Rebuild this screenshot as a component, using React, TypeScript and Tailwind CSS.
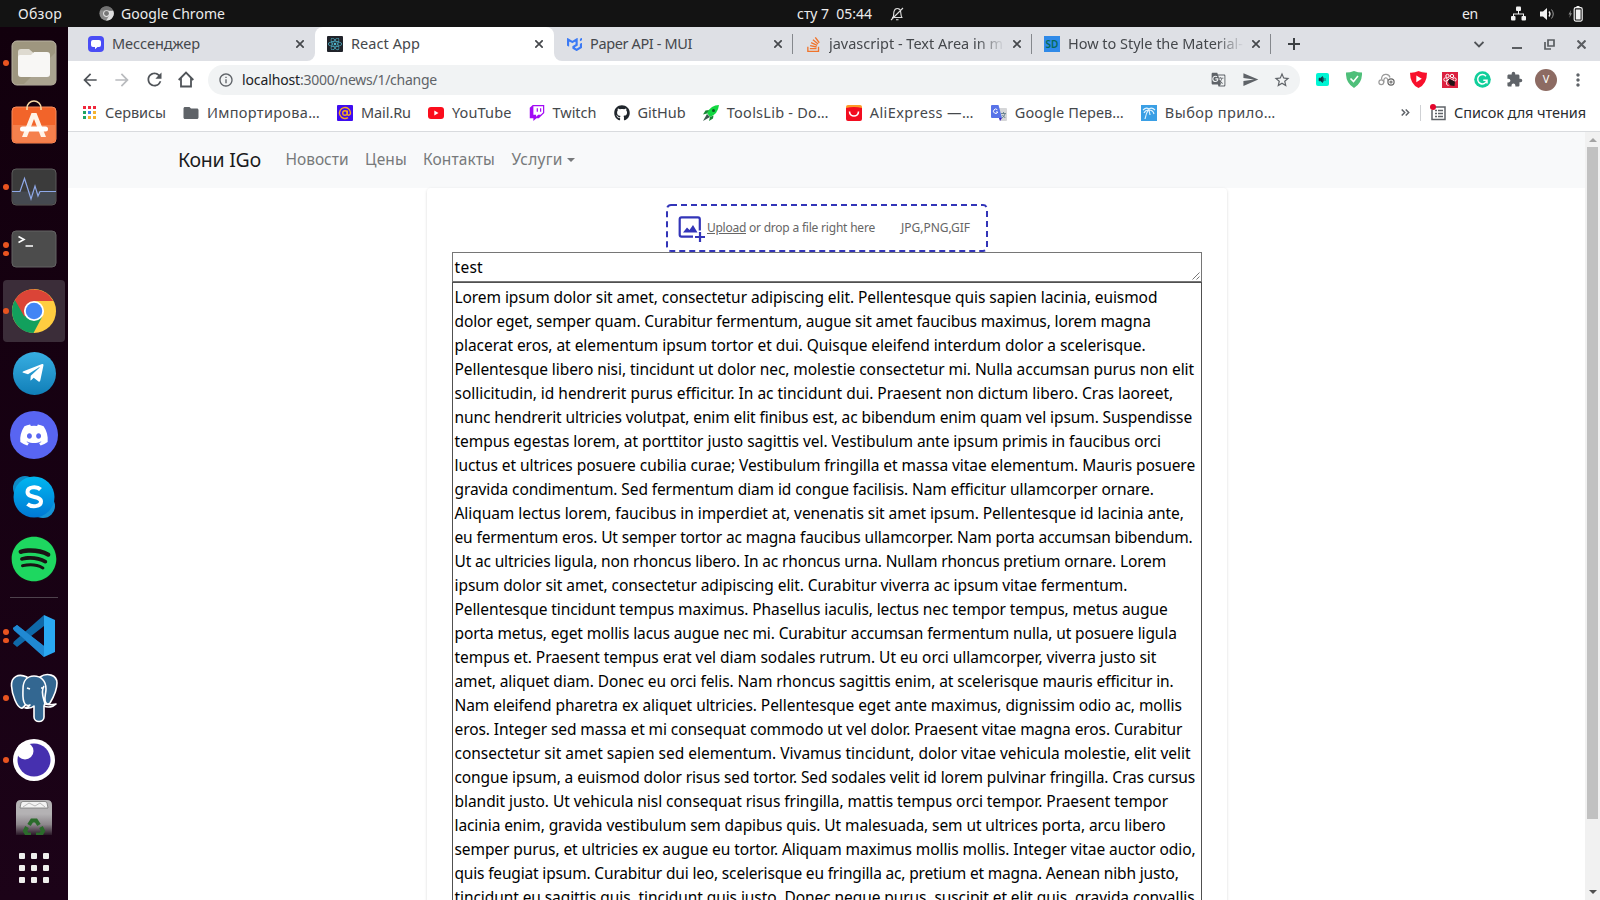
import { useLayoutEffect, useRef } from 'react';
import type { ReactNode } from 'react';
import { FaDiscord, FaGithub, FaReact, FaSpotify, FaTelegramPlane, FaTwitch } from 'react-icons/fa';
import { SiMui, SiStackoverflow } from 'react-icons/si';
import {
  MdArrowBack,
  MdArrowForward,
  MdExtension,
  MdFolder,
  MdGTranslate,
  MdMoreVert,
  MdOutlineInfo,
  MdRefresh,
  MdSend,
  MdStarBorder,
} from 'react-icons/md';

/* Single line of text tracked so that it fills exactly `w` pixels. */
function Fit({ w, children, className = '' }: { w: number; children: string; className?: string }) {
  const ref = useRef<HTMLSpanElement>(null);
  useLayoutEffect(() => {
    const el = ref.current;
    if (!el) return;
    el.style.letterSpacing = '0px';
    const natural = el.getBoundingClientRect().width;
    el.style.letterSpacing = `${(w - natural) / children.length}px`;
  }, [w, children]);
  return (
    <span ref={ref} className={`inline-block shrink-0 whitespace-pre ${className}`}>
      {children}
    </span>
  );
}

const LINES: [string, number][] = [
  ['Lorem ipsum dolor sit amet, consectetur adipiscing elit. Pellentesque quis sapien lacinia, euismod', 1134],
  ['dolor eget, semper quam. Curabitur fermentum, augue sit amet faucibus maximus, lorem magna', 1127.5],
  ['placerat eros, at elementum ipsum tortor et dui. Quisque eleifend interdum dolor a scelerisque.', 1122.5],
  ['Pellentesque libero nisi, tincidunt ut dolor nec, molestie consectetur mi. Nulla accumsan purus non elit', 1170],
  ['sollicitudin, id hendrerit purus efficitur. In ac tincidunt dui. Praesent non dictum libero. Cras laoreet,', 1149.5],
  ['nunc hendrerit ultricies volutpat, enim elit finibus est, ac bibendum enim quam vel ipsum. Suspendisse', 1168],
  ['tempus egestas lorem, at porttitor justo sagittis vel. Vestibulum ante ipsum primis in faucibus orci', 1137.5],
  ['luctus et ultrices posuere cubilia curae; Vestibulum fringilla et massa vitae elementum. Mauris posuere', 1171],
  ['gravida condimentum. Sed fermentum diam id congue facilisis. Nam efficitur ullamcorper ornare.', 1130.5],
  ['Aliquam lectus lorem, faucibus in imperdiet at, venenatis sit amet ipsum. Pellentesque id lacinia ante,', 1160],
  ['eu fermentum eros. Ut semper tortor ac magna faucibus ullamcorper. Nam porta accumsan bibendum.', 1168.5],
  ['Ut ac ultricies ligula, non rhoncus libero. In ac rhoncus urna. Nullam rhoncus pretium ornare. Lorem', 1142.5],
  ['ipsum dolor sit amet, consectetur adipiscing elit. Curabitur viverra ac ipsum vitae fermentum.', 1104.5],
  ['Pellentesque tincidunt tempus maximus. Phasellus iaculis, lectus nec tempor tempus, metus augue', 1144],
  ['porta metus, eget mollis lacus augue nec mi. Curabitur accumsan fermentum nulla, ut posuere ligula', 1153],
  ['tempus et. Praesent tempus erat vel diam sodales rutrum. Ut eu orci ullamcorper, viverra justo sit', 1133],
  ['amet, aliquet diam. Donec eu orci felis. Nam rhoncus sagittis enim, at scelerisque mauris efficitur in.', 1150],
  ['Nam eleifend pharetra ex aliquet ultricies. Pellentesque eget ante maximus, dignissim odio ac, mollis', 1158],
  ['eros. Integer sed massa et mi consequat commodo ut vel dolor. Praesent vitae magna eros. Curabitur', 1158.5],
  ['consectetur sit amet sapien sed elementum. Vivamus tincidunt, dolor vitae vehicula molestie, elit velit', 1166.5],
  ['congue ipsum, a euismod dolor risus sed tortor. Sed sodales velit id lorem pulvinar fringilla. Cras cursus', 1171],
  ['blandit justo. Ut vehicula nisl consequat risus fringilla, mattis tempus orci tempor. Praesent tempor', 1144.5],
  ['lacinia enim, gravida vestibulum sem dapibus quis. Ut malesuada, sem ut ultrices porta, arcu libero', 1142],
  ['semper purus, et ultricies ex augue eu tortor. Aliquam maximus mollis mollis. Integer vitae auctor odio,', 1171.5],
  ['quis feugiat ipsum. Curabitur dui leo, scelerisque eu fringilla ac, pretium et magna. Aenean nibh justo,', 1155],
  ['tincidunt eu sagittis quis, tincidunt quis justo. Donec neque purus, suscipit et elit quis, gravida convallis', 1170.5],
];

function TopBar() {
  return (
    <header className="flex h-[27px] shrink-0 items-center bg-[#131313] text-[14px] text-[#ececec]">
      <div className="flex w-[797px] shrink-0 items-center pl-[18px]">
        <Fit w={44}>Обзор</Fit>
        <svg className="ml-[37px] mr-[7px]" width="15" height="15" viewBox="0 0 16 16">
          <circle cx="8" cy="8" r="7.6" fill="#8b8b8b" />
          <path d="M8 4.5h7a7.6 7.6 0 0 1-7.3 11L11 9.8z" fill="#dedede" />
          <path d="M1.2 4.5A7.6 7.6 0 0 1 15 5H8z" fill="#727272" />
          <circle cx="8" cy="8" r="3.6" fill="#e6e6e6" />
          <circle cx="8" cy="8" r="2.6" fill="#777" />
        </svg>
        <Fit w={104}>Google Chrome</Fit>
      </div>
      <div className="flex items-center gap-[18px]">
        <Fit w={75}>сту 7  05:44</Fit>
        <svg width="14" height="14" viewBox="0 0 14 14" fill="none" stroke="#dedede" strokeWidth="1.1">
          <path d="M2 10.5h10.5M3 10.3C4 8.500 3.500 6.500 4 4.500c.5-2 2-3 3.300-3s3 1 3.300 3c.4 2 .2 4 1.200 5.800M6 12.700h2.500M1 13L13 1" />
        </svg>
      </div>
      <div className="flex flex-1 items-center justify-end pr-[17px]">
        <Fit w={16}>en</Fit>
        <svg className="ml-[33px]" width="15" height="15" viewBox="0 0 15 15" fill="#f2f2f2">
          <rect x="5" y="0.500" width="5" height="4.500" rx="1" />
          <rect x="0" y="10" width="4.500" height="4.500" rx="1" />
          <rect x="10.500" y="10" width="4.500" height="4.500" rx="1" />
          <path d="M7 5h1v2.500h5V10h-1V8.500H3V10H2V7.500h5z" />
        </svg>
        <svg className="ml-[14px]" width="15" height="14" viewBox="0 0 15 14" fill="none" stroke="#9a9a9a">
          <path d="M0 4.500h3L7 1v12L3 9.500H0z" fill="#f2f2f2" stroke="none" />
          <path d="M9 4.500q2 2.500 0 5" stroke="#f2f2f2" strokeWidth="1.300" />
          <path d="M11.500 2.500q3.500 4.500 0 9" />
        </svg>
        <svg className="ml-[13px]" width="15" height="16" viewBox="0 0 15 16">
          <path d="M3 4L0.500 8.500H2L1.300 12 4 7.300H2.500z" fill="#888" />
          <path d="M8.500 0h3v1.500h-3z" fill="#f2f2f2" />
          <rect x="6.200" y="1.700" width="8" height="13.400" rx="1.500" fill="none" stroke="#f2f2f2" strokeWidth="1.200" />
          <rect x="7.800" y="3.500" width="4.800" height="10" fill="#f2f2f2" />
        </svg>
      </div>
    </header>
  );
}

function Slot({ dots = 0, active = false, children }: { dots?: number; active?: boolean; children: ReactNode }) {
  return (
    <div className="flex h-[62px] w-[68px] shrink-0 items-center">
      <div className="flex w-[3px] shrink-0 flex-col gap-[3px]">
        {Array.from({ length: dots }, (_, i) => (
          <span key={i} className="relative left-[3px] z-10 h-[5.500px] w-[5.500px] rounded-full bg-[#e95420]" />
        ))}
      </div>
      <div className={`flex h-[62px] w-[62px] items-center justify-center rounded-[4px] ${active ? 'bg-[#3b2d39]' : ''}`}>
        {children}
      </div>
    </div>
  );
}

function Dock() {
  return (
    <aside className="flex w-[68px] shrink-0 flex-col bg-gradient-to-b from-[#12000d] to-[#1c0318] pt-[5px]">
      <Slot dots={1}>
        <svg width="46" height="46" viewBox="0 0 46 46">
          <rect x="1" y="1" width="44" height="44" rx="5" fill="#9e967f" stroke="#bab4a4" />
          <path d="M45 12L12 45h29a4 4 0 0 0 4-4z" fill="#aaa390" />
          <path d="M7 12q0-3 3-3h8l4 3.500v6H7z" fill="#dedad0" />
          <path d="M7 17q0-2 2-2h11l3-3h13q3 0 3 3v19q0 3-3 3H10q-3 0-3-3z" fill="#f8f7f5" />
        </svg>
      </Slot>
      <Slot>
        <svg className="mb-[7px]" width="46" height="44" viewBox="0 0 46 44">
          <rect x="1" y="7" width="44" height="36" rx="4" fill="#f2642a" stroke="#f88c5d" />
          <path d="M2 25h42v14q0 3-3 3H5q-3 0-3-3z" fill="#f5804d" />
          <path d="M16 10v-2a7 7 0 0 1 14 0v2" fill="none" stroke="#f7d9a4" strokeWidth="1.600" />
          <path d="M20.500 13h5L35 37h-5l-7-18-7 18h-5z" fill="#fff3e8" />
          <rect x="9" y="26.500" width="28" height="5" rx="2.500" fill="#fff" />
        </svg>
      </Slot>
      <Slot dots={1}>
        <svg width="46" height="38" viewBox="0 0 46 38">
          <rect x="1" y="1" width="44" height="36" rx="4" fill="#3b3b3b" stroke="#5b5b5b" />
          <path d="M2 23.500h42V33q0 3-3 3H5q-3 0-3-3z" fill="#454950" />
          <path d="M1 23.500h8l4.500-13L20 31l4-13 3 10 2-4.500h16" fill="none" stroke="#8fa8e8" strokeWidth="1.200" />
        </svg>
      </Slot>
      <Slot dots={2}>
        <svg width="46" height="38" viewBox="0 0 46 38">
          <rect x="1" y="1" width="44" height="36" rx="4" fill="#4c4c4c" stroke="#626262" />
          <path d="M7.500 6.500l5.500 3-5.500 3M14.500 16H22" fill="none" stroke="#fff" strokeWidth="1.600" />
        </svg>
      </Slot>
      <Slot dots={1} active>
        <svg width="46" height="46" viewBox="0 0 48 48">
          <circle cx="24" cy="24" r="23" fill="#ffcd40" />
          <path d="M24 24L4.100 12.500A23 23 0 0 0 23.500 47l9-17z" fill="#12a05d" />
          <path d="M4.100 12.500A23 23 0 0 1 44 13.500H24L14 30z" fill="#db4437" />
          <circle cx="24" cy="24" r="10.500" fill="#fff" />
          <circle cx="24" cy="24" r="8.600" fill="#4285f4" />
        </svg>
      </Slot>
      <Slot>
        <div className="flex size-[43px] items-center justify-center rounded-full bg-gradient-to-b from-[#37aee2] to-[#0f7fb8]">
          <FaTelegramPlane className="mr-[3px] size-[24px] text-white" />
        </div>
      </Slot>
      <Slot>
        <div className="flex size-[48px] items-center justify-center rounded-full bg-[#5865f2]">
          <FaDiscord className="size-[30px] text-white" />
        </div>
      </Slot>
      <Slot>
        <svg width="44" height="44" viewBox="0 0 44 44">
          <defs>
            <linearGradient id="sky" x1="0" y1="0" x2="0" y2="1">
              <stop offset="0" stopColor="#00b7f0" />
              <stop offset="1" stopColor="#0078d4" />
            </linearGradient>
          </defs>
          <circle cx="13" cy="13" r="12" fill="#0f89c4" />
          <circle cx="31" cy="31" r="12" fill="#1593d6" />
          <circle cx="22" cy="22" r="20.500" fill="url(#sky)" />
          <path d="M28.500 14.500C25 11 15.500 11.500 15.500 17c0 6.500 13.500 3.500 13.500 9.500 0 5.500-9.500 6-13.500 2.500" fill="none" stroke="#fff" strokeWidth="4" />
        </svg>
      </Slot>
      <Slot>
        <div className="flex size-[46px] items-center justify-center rounded-full bg-[#191414]">
          <FaSpotify className="size-[46px] text-[#1ed760]" />
        </div>
      </Slot>
      <div className="flex h-[15px] shrink-0 items-center justify-center">
        <span className="h-px w-[48px] bg-[#4e424c]" />
      </div>
      <Slot dots={2}>
        <svg width="42" height="42" viewBox="0 0 42 42">
          <path d="M0 13l4-3L31 31v11L1 15.500z" fill="#1478bd" />
          <path d="M0 28.500l4 3.500L31 11V0L1 26.500z" fill="#0f69a9" />
          <path d="M0 13l4-3 27 21v11L0 14z" fill="#2089d2" />
          <path d="M31 0l11 5v32l-11 5z" fill="#2aa8f2" />
        </svg>
      </Slot>
      <Slot dots={1}>
        <svg width="48" height="50" viewBox="0 0 48 50" fill="#336791" stroke="#fff" strokeWidth="1.600" strokeLinejoin="round">
          <path d="M30 4C37-1 47 2 47 10c0 7-4 15-7 20-2 2-4 1-5-2z" />
          <path d="M17 4C8 0 1 4 1.500 13 2 22 7 34 11 35c2 .5 3-1 6-5z" />
          <path d="M15 31c-3-4-2-9-2-15 0-8 4-13 11-13s12 5 12 13c0 5-2 8-1 14l-1 3v11c0 6-10 6-10 0V33c-3 3-6 2-9 2 2-1 4-1 5-3-2 1-4 0-5-1z" />
          <path d="M35 31c3 1 6 1 11 0-3 3-8 4-12 2M34 13c-4 6 0 13 1 18" fill="none" />
          <path d="M17 15l3 1M31 15l2 0" fill="none" />
        </svg>
      </Slot>
      <Slot dots={1}>
        <svg width="42" height="42" viewBox="0 0 42 42">
          <circle cx="21" cy="21" r="21" fill="#fff" />
          <circle cx="21" cy="21" r="16.500" fill="#4630af" />
          <circle cx="12" cy="12" r="8.500" fill="#fff" />
        </svg>
      </Slot>
      <Slot>
        <svg className="mb-[11px]" width="38" height="36" viewBox="0 0 38 36">
          <defs>
            <linearGradient id="bin" x1="0" y1="0" x2="0" y2="1">
              <stop offset="0.400" stopColor="#b4b2b4" />
              <stop offset="0.700" stopColor="#8d878c" />
              <stop offset="1" stopColor="#2a1727" />
            </linearGradient>
          </defs>
          <path d="M1 6q0-5 5-5h26q5 0 5 5v30H1z" fill="url(#bin)" />
          <path d="M5 9l1-5q.3-1.500 2-1.500h22q1.700 0 2 1.500l1 5z" fill="#f3f3f3" stroke="#777" strokeWidth="0.800" />
          <path d="M8 8l6-4 6 3 5-3 5 4" fill="none" stroke="#aaa" strokeWidth="0.800" />
          <g fill="none" stroke="#2b6b2b" strokeWidth="4">
            <path d="M14 26l3-4.500h4l3 4.500" />
            <path d="M26 28l2 4-2 3.500h-5" />
            <path d="M12 28l-2 4 2 3.500h4" />
          </g>
        </svg>
      </Slot>
      <div className="grid grid-cols-3 gap-[6px] self-center">
        {Array.from({ length: 9 }, (_, i) => (
          <span key={i} className="size-[6px] rounded-[1px] bg-[#eeeeec]" />
        ))}
      </div>
    </aside>
  );
}

function Cross({ className = '' }: { className?: string }) {
  return (
    <svg className={className} width="8" height="8" viewBox="0 0 8 8" stroke="#45484c" strokeWidth="1.700">
      <path d="M0.300 0.300l7.400 7.400M7.700 0.300L0.300 7.700" />
    </svg>
  );
}

function Tab({ icon, title, w, fade = false, sep = false }: { icon: ReactNode; title: string; w: number; fade?: boolean; sep?: boolean }) {
  return (
    <div className="flex h-[34px] w-[239px] shrink-0 items-center pl-[12px]">
      <span className="flex size-[16px] shrink-0 items-center justify-center">{icon}</span>
      <div
        className={`ml-[8px] w-[176px] shrink-0 overflow-hidden text-[14.500px] text-[#45484c] ${
          fade ? '[mask-image:linear-gradient(to_right,black_84%,transparent)]' : ''
        }`}
      >
        <Fit w={w}>{title}</Fit>
      </div>
      <Cross className="ml-[8px]" />
      {sep && <span className="ml-auto h-[20px] w-px bg-[#85888d]" />}
    </div>
  );
}

function TabStrip() {
  return (
    <div className="flex h-[34px] shrink-0 bg-white">
      <div className="w-[247px] shrink-0 rounded-br-[8px] bg-[#dee0e5] pl-[8px]">
        <Tab
          w={88}
          title="Мессенджер"
          icon={
            <svg width="16" height="16" viewBox="0 0 16 16">
              <rect width="16" height="16" rx="4" fill="#4a4df5" />
              <path d="M5 4h6q2 0 2 2v3q0 2-2 2h-1.500L7 13.300V11H5q-2 0-2-2V6q0-2 2-2z" fill="#fff" />
            </svg>
          }
        />
      </div>
      <div className="shrink-0 bg-[#dee0e5]">
        <div className="w-[239px] rounded-t-[8px] bg-white">
          <Tab
            w={69}
            title="React App"
            icon={
              <span className="flex size-[16px] items-center justify-center rounded-[1px] bg-[#20232a]">
                <FaReact className="size-[14px] text-[#4fb8cf]" />
              </span>
            }
          />
        </div>
      </div>
      <div className="flex flex-1 items-center rounded-bl-[8px] bg-[#dee0e5]">
        <Tab w={102} sep title="Paper API - MUI" icon={<SiMui className="size-[15px] text-[#3b7af5]" />} />
        <Tab w={174} fade sep title="javascript - Text Area in m" icon={<SiStackoverflow className="size-[15px] text-[#f0742b]" />} />
        <Tab
          w={175}
          fade
          sep
          title="How to Style the Material-"
          icon={
            <span className="flex size-[16px] items-center justify-center bg-[#2f8ae8] text-[10px] font-semibold text-[#066a58]">SD</span>
          }
        />
        <svg className="ml-[17px]" width="12" height="12" viewBox="0 0 12 12" stroke="#3c4043" strokeWidth="2">
          <path d="M6 0v12M0 6h12" />
        </svg>
        <div className="ml-auto flex items-center pr-[14px]">
          <svg width="10" height="7" viewBox="0 0 10 7" fill="none" stroke="#505357" strokeWidth="1.900">
            <path d="M0.500 1L5 5.500 9.500 1" />
          </svg>
          <span className="mt-[8px] ml-[28px] h-[2px] w-[10px] bg-[#5a5d61]" />
          <svg className="ml-[22px]" width="11" height="11" viewBox="0 0 11 11" fill="none" stroke="#5a5d61" strokeWidth="1.700">
            <path d="M4 1h6v6H4zM1 3v7h6" />
          </svg>
          <svg className="ml-[22px]" width="9" height="9" viewBox="0 0 9 9" stroke="#5a5d61" strokeWidth="2.100">
            <path d="M0.500 0.500l8 8M8.500 0.500l-8 8" />
          </svg>
        </div>
      </div>
    </div>
  );
}

function Tool({ children }: { children: ReactNode }) {
  return <span className="flex w-[32px] shrink-0 items-center justify-center">{children}</span>;
}

function Toolbar() {
  return (
    <div className="flex h-[38px] shrink-0 items-center bg-white pb-px pl-[6px] pr-[6px] text-[#5f6368]">
      <Tool><MdArrowBack className="size-[20px] text-[#505459]" /></Tool>
      <Tool><MdArrowForward className="size-[20px] text-[#b9bbbe]" /></Tool>
      <Tool><MdRefresh className="size-[21px] text-[#505459]" /></Tool>
      <Tool>
        <svg width="16" height="17" viewBox="0 0 16 17" fill="none" stroke="#505459" strokeWidth="1.800">
          <path d="M0.700 9L8 1.500 15.300 9M3 7v8.500h10V7" />
        </svg>
      </Tool>
      <div className="ml-[6px] flex h-[30px] w-[1092px] shrink-0 items-center rounded-full bg-[#f1f3f4] pl-[10px] pr-[2px]">
        <MdOutlineInfo className="size-[16px]" />
        <span className="mb-px ml-[8px] flex text-[14px]">
          <Fit w={58} className="text-[#202124]">localhost</Fit>
          <Fit w={137}>:3000/news/1/change</Fit>
        </span>
        <span className="ml-auto flex">
          <Tool><MdGTranslate className="size-[15px]" /></Tool>
          <Tool><MdSend className="size-[17px]" /></Tool>
          <Tool><MdStarBorder className="size-[18px]" /></Tool>
        </span>
      </div>
      <div className="ml-[6px] flex items-center">
        <Tool>
          <svg width="13" height="13" viewBox="0 0 13 13">
            <rect width="13" height="13" rx="2" fill="#00f5d4" />
            <path d="M3 5.200h1.500L6.500 3.500v6L4.500 7.800H3zM7.500 4.500v4M9 5v3" fill="#134" stroke="#134" strokeWidth="0.700" />
          </svg>
        </Tool>
        <Tool>
          <svg width="16" height="17" viewBox="0 0 16 17">
            <path d="M8 0q4 1.500 8 1.500Q16.500 12 8 17-.5 12 0 1.500 4 1.500 8 0z" fill="#4fbf7a" />
            <path d="M4.500 7.500l3 3 4.500-5.500" fill="none" stroke="#fff" strokeWidth="1.600" />
          </svg>
        </Tool>
        <Tool>
          <svg width="17" height="13" viewBox="0 0 17 13" fill="none" stroke="#9a9a9a" strokeWidth="1.200">
            <circle cx="3.300" cy="9.200" r="2.400" />
            <circle cx="13" cy="9" r="3.100" stroke="#666" />
            <circle cx="13" cy="9" r="1" stroke="#777" />
            <path d="M3.500 6.500C3.500 0 11 0 12 4.500M6 9.500C5 4 9.500 3 10 8" />
          </svg>
        </Tool>
        <Tool>
          <svg width="17" height="17" viewBox="0 0 17 17">
            <path d="M8.500 0q4 2 8.500 1.700Q17 13 8.500 17 0 13 0 1.700 4.500 2 8.500 0z" fill="#f8102c" />
            <path d="M6.300 4.500l5.500 3.300-5.500 3.400z" fill="#fff" />
          </svg>
        </Tool>
        <Tool>
          <svg width="16" height="16" viewBox="0 0 16 16">
            <rect width="16" height="16" fill="#dc2140" />
            <g fill="none" stroke="#fff" strokeWidth="1">
              <circle cx="5.500" cy="4" r="1.700" />
              <circle cx="10" cy="4" r="1.700" />
              <circle cx="3.500" cy="7.500" r="1.700" />
              <circle cx="12.500" cy="7.500" r="1.700" />
              <path d="M5 9.500Q3.500 13 6.500 13.500M4.500 9.500l3-3 2 1" />
            </g>
            <path d="M7.500 6.500l2 1.500 3.500 1.500-.5 4.500-4-.5-2.500-3.500z" fill="#241316" />
          </svg>
        </Tool>
        <Tool>
          <svg width="17" height="17" viewBox="0 0 17 17">
            <circle cx="8.500" cy="8.500" r="8.300" fill="#11cf9b" />
            <path d="M12 5.200A4.700 4.700 0 1 0 13 9.200H9.300M13 9v3.500" fill="none" stroke="#fff" strokeWidth="1.500" />
          </svg>
        </Tool>
        <Tool><MdExtension className="size-[17px]" /></Tool>
        <Tool>
          <span className="flex size-[22px] items-center justify-center rounded-full bg-[#8d6b63] text-[11px] text-white">V</span>
        </Tool>
        <Tool><MdMoreVert className="size-[20px]" /></Tool>
      </div>
    </div>
  );
}

function Bookmark({ icon, title, w }: { icon: ReactNode; title: string; w: number }) {
  return (
    <div className="flex shrink-0 items-center">
      <span className="mr-[8px] flex size-[16px] items-center justify-center">{icon}</span>
      <Fit w={w}>{title}</Fit>
    </div>
  );
}

const APP_COLORS = [
  'bg-[#f0283c]', 'bg-[#f0283c]', 'bg-[#f0283c]',
  'bg-[#1fa463]', 'bg-[#4285f4]', 'bg-[#f5b32f]',
  'bg-[#1fa463]', 'bg-[#f5b32f]', 'bg-[#f5b32f]',
];

function Bookmarks() {
  return (
    <div className="flex h-[33px] shrink-0 items-center gap-[17px] border-b border-[#d9dbde] bg-white pb-[5px] pl-[13px] pr-[14px] pt-0 text-[14.500px] text-[#45484c]">
      <Bookmark
        w={61}
        title="Сервисы"
        icon={
          <span className="grid grid-cols-3 gap-[2px]">
            {APP_COLORS.map((c, i) => <i key={i} className={`size-[3px] ${c}`} />)}
          </span>
        }
      />
      <Bookmark w={113} title="Импортирова…" icon={<MdFolder className="size-[18px] shrink-0 text-[#5f6368]" />} />
      <Bookmark
        w={50}
        title="Mail.Ru"
        icon={
          <svg width="16" height="16" viewBox="0 0 16 16" fill="none" stroke="#f7a91e" strokeWidth="1.400">
            <rect width="16" height="16" rx="1" fill="#3f0df0" stroke="none" />
            <circle cx="8" cy="8" r="2.300" />
            <path d="M10.300 5.500V9q.3 1.500 1.700 1.200Q13.500 9.500 13.500 8A5.500 5.500 0 1 0 11 12.600" />
          </svg>
        }
      />
      <Bookmark
        w={59.5}
        title="YouTube"
        icon={
          <svg width="16" height="12" viewBox="0 0 16 12">
            <rect width="16" height="12" rx="3" fill="#fb0d1c" />
            <path d="M6.300 3.500l4.200 2.500-4.200 2.500z" fill="#fff" />
          </svg>
        }
      />
      <Bookmark w={44} title="Twitch" icon={<FaTwitch className="size-[16px] text-[#a20bf5]" />} />
      <Bookmark w={48.3} title="GitHub" icon={<FaGithub className="size-[16px] text-[#20262c]" />} />
      <Bookmark
        w={102}
        title="ToolsLib - Do…"
        icon={
          <svg width="16" height="16" viewBox="0 0 16 16">
            <path d="M16 0Q8 0 4 8l3 4Q15 9 16 0z" fill="#12d840" />
            <path d="M6 5L2.500 5.500 0 9.500 4 8.500zM10.500 10.500L10 13.500 6 16l1-4z" fill="#198a36" />
            <path d="M4 9L0 16l7-4z" fill="#3b5950" />
            <circle cx="10.500" cy="5.500" r="1.500" fill="#0a5f24" />
          </svg>
        }
      />
      <Bookmark
        w={104}
        title="AliExpress —…"
        icon={
          <svg width="16" height="16" viewBox="0 0 16 16">
            <rect width="16" height="10" rx="2" fill="#ff9a28" />
            <path d="M0 3q8-2 16 0v11q0 2-2 2H2q-2 0-2-2z" fill="#f20d20" />
            <path d="M3.500 6.500c0 6 9 6 9 0" fill="none" stroke="#fff" strokeWidth="1.600" />
          </svg>
        }
      />
      <Bookmark
        w={109}
        title="Google Перев…"
        icon={
          <svg width="16" height="16" viewBox="0 0 16 16">
            <path d="M6 3h9q1 0 1 1v11q0 1-1 1H9z" fill="#d5d6d8" />
            <path d="M8 13h3l-2 3z" fill="#3a20c0" />
            <path d="M1 0h6.500L11 13H1q-1 0-1-1V1q0-1 1-1z" fill="#5873e8" />
            <path d="M6.300 4.700A2.200 2.200 0 1 0 6.800 7H5" fill="none" stroke="#fff" />
            <path d="M10 8.500h5M12.500 7v1.500M14 9q-1 3-3 4M11.300 10l3 3" fill="none" stroke="#607d8b" strokeWidth="0.900" />
          </svg>
        }
      />
      <Bookmark
        w={111}
        title="Выбор прило…"
        icon={
          <svg width="16" height="16" viewBox="0 0 16 16">
            <rect width="16" height="16" fill="#3a9fe5" />
            <path d="M2 5q3-3 6-1 3-2 6 1M8 4Q5 8 4 14M8 5q4 0 5 4M8 5l1 5M7 5Q4 5.500 3 8" fill="none" stroke="#e3f4ff" strokeWidth="1.200" />
          </svg>
        }
      />
      <div className="ml-auto flex items-center text-[#292c2f]">
        <svg width="9" height="7" viewBox="0 0 9 7" fill="none" stroke="#5f6368" strokeWidth="1.500">
          <path d="M0.700 0.500l3 3-3 3M4.700 0.500l3 3-3 3" />
        </svg>
        <span className="ml-[10px] h-[16px] w-px bg-[#cfd1d4]" />
        <svg className="ml-[9px] mr-[8px]" width="16" height="17" viewBox="0 0 16 17">
          <path d="M3 3h12v12.500H2V6" fill="none" stroke="#5f6368" strokeWidth="1.500" />
          <path d="M5 6.500h2M8 6.500h5M5 9.500h2M8 9.500h5M5 12.500h2M8 12.500h5" stroke="#5f6368" strokeWidth="1.400" />
          <circle cx="3" cy="3" r="3" fill="#e3062c" />
        </svg>
        <Fit w={132}>Список для чтения</Fit>
      </div>
    </div>
  );
}

function Page() {
  return (
    <main className="flex min-h-0 flex-1 overflow-hidden bg-white">
      <div className="flex flex-1 flex-col overflow-hidden">
        <nav className="flex h-[56px] shrink-0 items-center bg-[#f8f9fa] pl-[110px] text-[15.500px] text-[#77797b]">
          <Fit w={83} className="text-[19.500px] text-[#1b1c1d]">Кони IGo</Fit>
          <Fit w={63} className="ml-[24.500px]">Новости</Fit>
          <Fit w={42} className="ml-[16.500px]">Цены</Fit>
          <Fit w={72} className="ml-[16px]">Контакты</Fit>
          <Fit w={51} className="ml-[16.500px]">Услуги</Fit>
          <span className="ml-[4px] border-x-[4.500px] border-t-[4.500px] border-x-transparent border-t-[#77797b]" />
        </nav>
        <section className="ml-[359px] flex w-[800px] flex-1 flex-col rounded-t-[4px] px-[25px] pt-[16px] shadow-[0_1px_3px_rgba(0,0,0,0.16)]">
          <div className="relative flex h-[48px] w-[322px] shrink-0 items-center self-center pl-[11px] text-[12px] text-[#666]">
            <svg className="absolute inset-0" width="322" height="48" fill="none" stroke="#3335b8" strokeWidth="2">
              <rect x="1" y="1" width="320" height="46" rx="4" strokeDasharray="6 4" />
            </svg>
            <svg className="mt-px" width="28" height="28" viewBox="0 0 28 28" fill="none" stroke="#3335b8" strokeWidth="2.200">
              <path d="M16 21.600H4.500q-1.800 0-1.800-1.800V4.200q0-1.800 1.800-1.800h16.500q1.800 0 1.800 1.800v11.300" />
              <path d="M23 17v10M18 22h10" />
              <path d="M6 17.500l4-5 2.500 2.500L16 10l4.500 7.500z" fill="#3335b8" stroke="none" />
            </svg>
            <Fit w={39} className="ml-[2px] underline">Upload</Fit>
            <Fit w={129}> or drop a file right here</Fit>
            <Fit w={69} className="ml-[26px]">JPG,PNG,GIF</Fit>
          </div>
          <div className="relative h-[30px] shrink-0 border border-[#767676] py-[2px] pl-[1.500px] text-[15.500px] leading-[24px] text-black">
            <Fit w={28.5}>test</Fit>
            <svg className="absolute bottom-px right-px" width="8" height="8" stroke="#666" strokeWidth="0.900">
              <path d="M0.500 7.500l7-7M4.500 7.500l3-3" />
            </svg>
          </div>
          <div className="flex h-[640px] shrink-0 flex-col overflow-hidden border border-[#505050] py-[2px] pl-[1.500px] text-[15.500px] leading-[24px] text-black">
            {LINES.map(([text, end]) => (
              <div key={text} className="h-[24px] shrink-0">
                <Fit w={(end - 445.2) * 1.0204}>{text}</Fit>
              </div>
            ))}
          </div>
        </section>
      </div>
      <div className="flex w-[15px] shrink-0 flex-col items-center bg-[#f1f1f1] pb-[6px] pt-[6px]">
        <span className="border-x-4 border-b-4 border-x-transparent border-b-[#a3a3a3]" />
        <span className="mt-[5px] h-[672px] w-[11px] bg-[#c1c1c1]" />
        <span className="mt-auto border-x-4 border-t-4 border-x-transparent border-t-[#505050]" />
      </div>
    </main>
  );
}

export default function App() {
  return (
    <div className="flex h-[900px] w-[1600px] flex-col overflow-hidden font-['Noto_Sans',sans-serif]">
      <TopBar />
      <div className="flex min-h-0 flex-1">
        <Dock />
        <div className="flex min-w-0 flex-1 flex-col">
          <TabStrip />
          <Toolbar />
          <Bookmarks />
          <Page />
        </div>
      </div>
    </div>
  );
}
